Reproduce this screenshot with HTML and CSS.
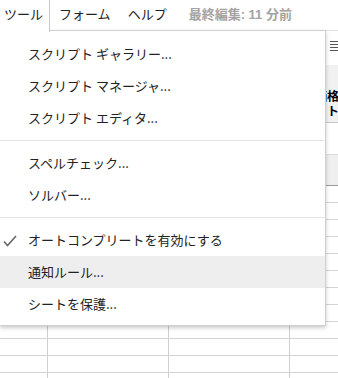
FILE: index.html
```html
<!DOCTYPE html>
<html lang="ja">
<head>
  <meta charset="UTF-8">
  <meta name="viewport" content="width=device-width, initial-scale=1.0">
  <title>ツール メニュー</title>
  <link rel="stylesheet" href="styles.css">
</head>
<body>
  <div class="page">
    <div class="menubar">
      <div class="menubar-item active">ツール</div>
      <div class="menubar-item form">フォーム</div>
      <div class="menubar-item help">ヘルプ</div>
      <div class="last-edit">最終編集: 11 分前</div>
    </div>

    <div class="toolbar">
      <svg class="align-icon" width="10" height="13" viewBox="0 0 10 13">
        <path d="M0 1.5h10M0 4.5h10M0 7.5h10M0 10.5h10" stroke="#555" stroke-width="1"/>
      </svg>
    </div>

    <div class="formula-area">
      <div class="clipped-text">価格<br>ト</div>
    </div>

    <div class="spacer"></div>
    <div class="col-header"></div>

    <div class="grid">
      <div class="row"><div></div><div></div><div></div><div></div></div>
      <div class="row"><div></div><div></div><div></div><div></div></div>
      <div class="row"><div></div><div></div><div></div><div></div></div>
      <div class="row"><div></div><div></div><div></div><div></div></div>
      <div class="row"><div></div><div></div><div></div><div></div></div>
      <div class="row"><div></div><div></div><div></div><div></div></div>
      <div class="row"><div></div><div></div><div></div><div></div></div>
      <div class="row"><div></div><div></div><div></div><div></div></div>
      <div class="row"><div></div><div></div><div></div><div></div></div>
      <div class="row"><div></div><div></div><div></div><div></div></div>
      <div class="row"><div></div><div></div><div></div><div></div></div>
      <div class="row"><div></div><div></div><div></div><div></div></div>
    </div>

    <div class="menu">
      <div class="menu-item">スクリプト ギャラリー...</div>
      <div class="menu-item">スクリプト マネージャ...</div>
      <div class="menu-item">スクリプト エディタ...</div>
      <div class="separator"></div>
      <div class="menu-item">スペルチェック...</div>
      <div class="menu-item">ソルバー...</div>
      <div class="separator"></div>
      <div class="menu-item checked">
        <svg class="check" width="14" height="12" viewBox="0 0 14 12">
          <path d="M1 6.5l3.5 4L13 1" fill="none" stroke="#666" stroke-width="1.6"/>
        </svg>
        オートコンプリートを有効にする
      </div>
      <div class="menu-item hover">通知ルール...</div>
      <div class="menu-item">シートを保護...</div>
    </div>
  </div>
</body>
</html>
```

FILE: styles.css
```css
* {
  margin: 0;
  padding: 0;
  box-sizing: border-box;
}

body {
  font-family: Arial, "Liberation Sans", "Noto Sans CJK JP", sans-serif;
  font-size: 13px;
  color: #222;
  background: #fff;
}

.page {
  position: relative;
  width: 338px;
  height: 378px;
  overflow: hidden;
}

/* menu bar */

.menubar {
  display: flex;
  align-items: flex-start;
  height: 31px;
  border-bottom: 1px solid #e2e2e2;
}

.menubar-item {
  height: 30px;
  line-height: 30px;
  color: #222;
}

.menubar-item.active {
  position: relative;
  z-index: 3;
  width: 50px;
  height: 32px;
  padding-left: 4px;
  background: #fff;
  border-right: 1px solid #c8c8c8;
}

.menubar-item.form {
  margin-left: 9px;
}

.menubar-item.help {
  margin-left: 17px;
}

.last-edit {
  margin-left: 22px;
  line-height: 30px;
  font-weight: bold;
  color: #a3a3a3;
}

/* spreadsheet behind the menu */

.toolbar {
  display: flex;
  justify-content: flex-end;
  height: 34px;
  padding-top: 9px;
}

.align-icon {
  margin-right: -2px;
}

.formula-area {
  display: flex;
  justify-content: flex-end;
  height: 58px;
  background: #f1f1f1;
  border-bottom: 1px solid #c3c8d0;
  padding-top: 25px;
}

.clipped-text {
  font-size: 12px;
  font-weight: bold;
  line-height: 15px;
  text-align: right;
  color: #000;
  margin-right: -1px;
}

.spacer {
  height: 32px;
  border-bottom: 1px solid #dcdcdc;
}

.col-header {
  height: 31px;
  background: #efefef;
  border-bottom: 1px solid #9a9a9a;
}

.row {
  display: grid;
  grid-template-columns: 48px 121px 121px 1fr;
  height: 17px;
  border-bottom: 1px solid #d4d4d4;
}

.row div {
  border-right: 1px solid #cfcfcf;
}

.row div:last-child {
  border-right: none;
}

/* dropdown */

.menu {
  position: absolute;
  top: 30px;
  left: 0;
  z-index: 2;
  width: 326px;
  padding: 7px 0 5px;
  background: #fff;
  border: 1px solid #cfcfcf;
  border-left: none;
  box-shadow: 0 2px 4px rgba(0, 0, 0, 0.2);
  font-family: "Noto Sans CJK JP", sans-serif;
  font-size: 13px;
  color: #222;
}

.menu-item {
  position: relative;
  height: 32px;
  line-height: 32px;
  padding-left: 28px;
}

.menu-item.hover {
  background: #eeeeee;
}

.check {
  position: absolute;
  left: 3px;
  top: 11px;
}

.separator {
  height: 1px;
  margin: 6px 0;
  background: #e5e5e5;
}
```
